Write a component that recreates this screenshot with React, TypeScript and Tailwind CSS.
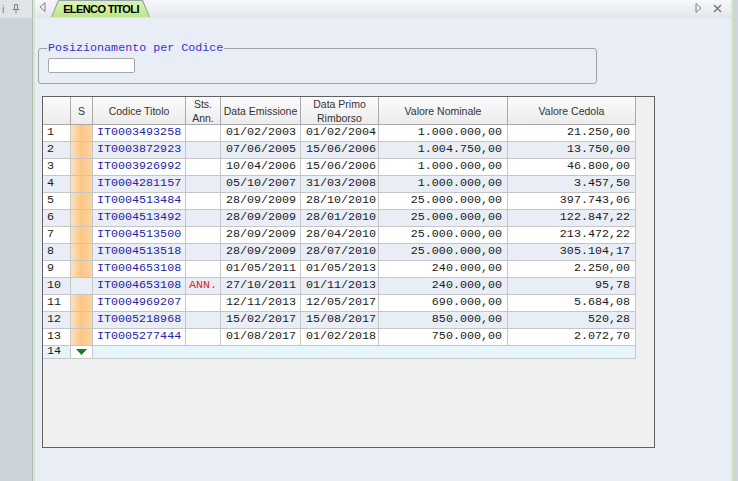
const rows = [
  { n: 1, s: true, code: 'IT0003493258', sts: '', em: '01/02/2003', rb: '01/02/2004', nom: '1.000.000,00', ced: '21.250,00' },
  { n: 2, s: true, code: 'IT0003872923', sts: '', em: '07/06/2005', rb: '15/06/2006', nom: '1.004.750,00', ced: '13.750,00' },
  { n: 3, s: true, code: 'IT0003926992', sts: '', em: '10/04/2006', rb: '15/06/2006', nom: '1.000.000,00', ced: '46.800,00' },
  { n: 4, s: true, code: 'IT0004281157', sts: '', em: '05/10/2007', rb: '31/03/2008', nom: '1.000.000,00', ced: '3.457,50' },
  { n: 5, s: true, code: 'IT0004513484', sts: '', em: '28/09/2009', rb: '28/10/2010', nom: '25.000.000,00', ced: '397.743,06' },
  { n: 6, s: true, code: 'IT0004513492', sts: '', em: '28/09/2009', rb: '28/01/2010', nom: '25.000.000,00', ced: '122.847,22' },
  { n: 7, s: true, code: 'IT0004513500', sts: '', em: '28/09/2009', rb: '28/04/2010', nom: '25.000.000,00', ced: '213.472,22' },
  { n: 8, s: true, code: 'IT0004513518', sts: '', em: '28/09/2009', rb: '28/07/2010', nom: '25.000.000,00', ced: '305.104,17' },
  { n: 9, s: true, code: 'IT0004653108', sts: '', em: '01/05/2011', rb: '01/05/2013', nom: '240.000,00', ced: '2.250,00' },
  { n: 10, s: false, code: 'IT0004653108', sts: 'ANN.', em: '27/10/2011', rb: '01/11/2013', nom: '240.000,00', ced: '95,78' },
  { n: 11, s: true, code: 'IT0004969207', sts: '', em: '12/11/2013', rb: '12/05/2017', nom: '690.000,00', ced: '5.684,08' },
  { n: 12, s: true, code: 'IT0005218968', sts: '', em: '15/02/2017', rb: '15/08/2017', nom: '850.000,00', ced: '520,28' },
  { n: 13, s: true, code: 'IT0005277444', sts: '', em: '01/08/2017', rb: '01/02/2018', nom: '750.000,00', ced: '2.072,70' },
];

const cols = 'grid grid-cols-[28px_22px_93px_35px_80px_78px_129px_128px]';
const mono = "font-['Liberation_Mono',monospace] text-[11.7px]";
const cell = 'h-[17px] border-r border-b border-[#c6c6c6] flex items-center overflow-hidden whitespace-nowrap';

function HeaderCell({ children }: { children?: React.ReactNode }) {
  return (
    <div className="h-[28px] border-r border-b border-[#a9a9a9] bg-gradient-to-b from-[#fbfbfb] to-[#ececec] flex items-center justify-center text-center leading-[14px] text-[10.5px] text-[#333]">
      {children}
    </div>
  );
}

export default function App() {
  return (
    <div className="flex h-[481px] w-[738px] bg-[#cdd4dc] font-['Liberation_Sans',Arial,sans-serif] overflow-hidden">
      {/* side strip */}
      <div className="w-[32px] flex flex-col">
        <div className="h-[18px] bg-[#e0e4e9] flex items-center gap-[8px] pl-[2px] text-[#7a7f86]">
          <span className="text-[11px] leading-none">i</span>
          <svg width="8" height="10" viewBox="0 0 8 10" fill="none" stroke="#7a7f86" strokeWidth="1">
            <path d="M2.5 0.5h3v5h-3z M0.5 5.5h7 M4 5.5v4" />
          </svg>
        </div>
        <div className="flex-1 bg-[#ccd3db]" />
      </div>

      {/* document window */}
      <div className="w-[701px] flex flex-col border-l border-[#b3bac3]">
        <div className="flex-1 flex flex-col border-l-2 border-r-2 border-[#d2ecbf]">
          {/* tab bar */}
          <div className="h-[18px] bg-gradient-to-b from-[#f6f7f9] to-[#e4e8ee] border-b border-[#dbe9cf] flex items-end">
            <svg className="ml-[4px] mb-[5px]" width="7" height="10" viewBox="0 0 7 10" fill="none" stroke="#7d838b" strokeWidth="1">
              <path d="M6 0.5L1 5l5 4.5z" />
            </svg>
            <div className="ml-[5px] h-[17px] w-[99px] bg-[#9aa3ad] [clip-path:polygon(7px_0,92px_0,99px_100%,0_100%)]">
              <div className="h-[17px] w-[99px] pt-[1px] pl-[1px] bg-gradient-to-b from-[#def6bb] to-[#bde784] [clip-path:polygon(8px_1px,91px_1px,98px_100%,1px_100%)] flex items-center justify-center text-[11px] font-bold tracking-[-0.6px] text-black">
                ELENCO TITOLI
              </div>
            </div>
            <div className="ml-auto mr-[9px] mb-[4px] flex items-center gap-[11px]">
              <svg width="7" height="10" viewBox="0 0 7 10" fill="none" stroke="#7d838b" strokeWidth="1">
                <path d="M1 0.5L6 5l-5 4.5z" />
              </svg>
              <svg width="9" height="9" viewBox="0 0 9 9" stroke="#6f757c" strokeWidth="1.4">
                <path d="M1 1l7 7M8 1l-7 7" />
              </svg>
            </div>
          </div>

          {/* content */}
          <div className="flex-1 bg-[#e9edf5] flex flex-col items-start">
            <fieldset className="mt-[23px] ml-[3px] w-[559px] h-[43px] border border-[#9ea3aa] rounded-[3px]">
              <legend className={`ml-[8px] px-[1px] leading-[14px] ${mono} text-[#3434c8]`}>Posizionamento per Codice</legend>
              <div className="mt-[3px] ml-[9px] w-[87px] h-[15px] bg-white border border-[#a5a9ae] rounded-[2px]" />
            </fieldset>

            {/* grid */}
            <div className="mt-[12px] ml-[7px] w-[613px] h-[352px] border border-[#5f6163] bg-[#f0f0f0] flex flex-col">
              <div className={cols}>
                <HeaderCell />
                <HeaderCell>S</HeaderCell>
                <HeaderCell>Codice Titolo</HeaderCell>
                <HeaderCell>
                  <span>
                    Sts.
                    <br />
                    Ann.
                  </span>
                </HeaderCell>
                <HeaderCell>Data Emissione</HeaderCell>
                <HeaderCell>
                  <span>
                    Data Primo
                    <br />
                    Rimborso
                  </span>
                </HeaderCell>
                <HeaderCell>Valore Nominale</HeaderCell>
                <HeaderCell>Valore Cedola</HeaderCell>
              </div>

              {rows.map(r => {
                const bg = r.n % 2 === 0 ? 'bg-[#e8edf6]' : 'bg-white';
                return (
                  <div key={r.n} className={`${cols} ${mono} text-[#1a1a1a]`}>
                    <div className={`${cell} ${bg} pl-[4px]`}>{r.n}</div>
                    <div className={`${cell} ${r.s ? 'bg-gradient-to-r from-[#fde3c0] via-[#fbc584] to-[#fcd5a2]' : bg}`} />
                    <div className={`${cell} ${bg} pl-[4px] text-[#2323a6]`}>{r.code}</div>
                    <div className={`${cell} ${bg} pl-[3px] text-[#e0262a]`}>{r.sts}</div>
                    <div className={`${cell} ${bg} pl-[5px]`}>{r.em}</div>
                    <div className={`${cell} ${bg} pl-[5px]`}>{r.rb}</div>
                    <div className={`${cell} ${bg} justify-end pr-[5px]`}>{r.nom}</div>
                    <div className={`${cell} ${bg} justify-end pr-[5px]`}>{r.ced}</div>
                  </div>
                );
              })}

              {/* new row */}
              <div className={`grid grid-cols-[28px_22px_543px] ${mono} text-[#1a1a1a]`}>
                <div className="h-[13px] border-r border-b border-[#c6c6c6] bg-[#e6f4fc] pl-[4px] flex items-center">14</div>
                <div className="h-[13px] border-r border-b border-[#c6c6c6] bg-white flex items-center justify-center">
                  <svg width="11" height="6" viewBox="0 0 11 6">
                    <path d="M0 0h11L5.5 6z" fill="#1f7a1f" />
                  </svg>
                </div>
                <div className="h-[13px] border-r border-b border-[#c6c6c6] bg-[#e6f4fc]" />
              </div>
            </div>
          </div>
        </div>
      </div>

      <div className="flex-1 bg-[#cdd4dc]" />
    </div>
  );
}
